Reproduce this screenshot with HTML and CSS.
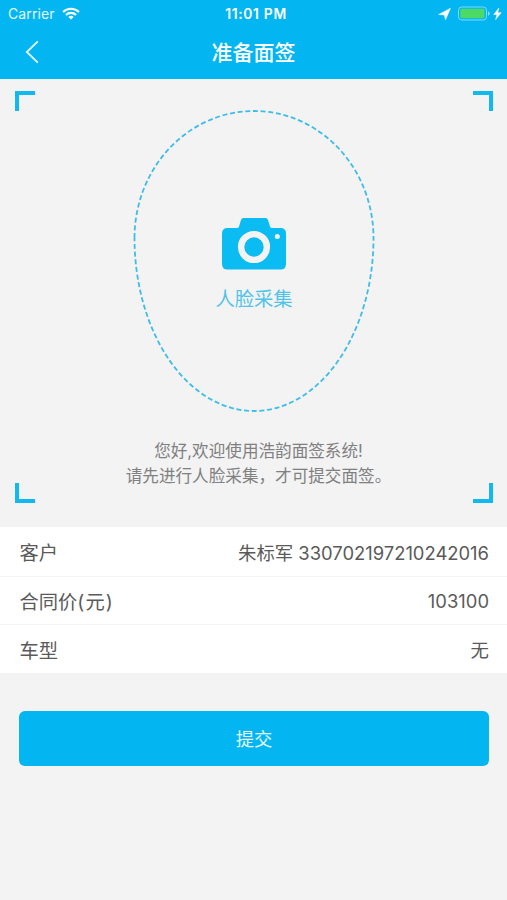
FILE: index.html
```html
<!DOCTYPE html>
<html lang="zh-CN">
<head>
<meta charset="utf-8">
<title>准备面签</title>
<link rel="stylesheet" href="styles.css">
</head>
<body>
<header class="header">
  <div class="status">
    <div class="status-left">
      <span class="carrier">Carrier</span>
      <svg class="wifi" width="18" height="13" viewBox="0 0 18 13" fill="none" stroke="#fff" stroke-width="2.2">
        <path d="M1.1 5A11.2 11.2 0 0 1 16.9 5"/>
        <path d="M4 8A7.1 7.1 0 0 1 14 8"/>
        <path d="M9 12.6L6.4 10A3.7 3.7 0 0 1 11.6 10Z" fill="#fff" stroke="none"/>
      </svg>
    </div>
    <span class="clock">11:01 PM</span>
    <div class="status-right">
      <svg width="67" height="16" viewBox="0 0 67 16">
        <path d="M13.5 2.2L8.5 13.8L7.3 9L1.7 8.5Z" fill="#fff" stroke="#fff" stroke-width=".5" stroke-linejoin="round"/>
        <rect x="21.5" y="1" width="28" height="13" rx="3.2" fill="none" stroke="#7fdaf8"/>
        <rect x="23.3" y="2.8" width="24.2" height="9.4" rx="1.4" fill="#4cd964"/>
        <path d="M51 5.2q1.8.3 1.8 2.3t-1.8 2.3z" fill="#7fdaf8"/>
        <path d="M61.8 2L56.7 8.6H60L58.6 13.6L64.2 6.7H60.8Z" fill="#fff" stroke="#fff" stroke-width=".5"/>
      </svg>
    </div>
  </div>
  <nav class="nav">
    <svg class="back" width="14" height="24" viewBox="0 0 14 24" fill="none" stroke="#e9faff" stroke-width="1.8"><path d="M12.8 1.3L1.8 12L12.8 22.7"/></svg>
    <h1>准备面签</h1>
  </nav>
</header>

<main>
  <section class="capture">
    <i class="corner top-left"></i>
    <i class="corner top-right"></i>
    <i class="corner bottom-left"></i>
    <i class="corner bottom-right"></i>
    <div class="face">
      <svg class="outline" width="242" height="302" viewBox="0 0 242 302" fill="none" stroke="#3dbde9" stroke-width="1.8" stroke-dasharray="5 2.7">
        <path d="M1.5 128A119.5 127 0 0 1 240.5 128A119.5 173 0 0 1 1.5 128Z"/>
      </svg>
      <svg class="camera" width="64" height="52" viewBox="0 0 64 52">
        <path fill="#0bbcf3" d="M5.5 10H15Q16.5 10 17 8.5L19 2Q19.6 0 21.5 0H43.5Q45.4 0 46 2L48 8.5Q48.5 10 50 10H58.5Q64 10 64 15.5V46Q64 51.5 58.5 51.5H5.5Q0 51.5 0 46V15.5Q0 10 5.5 10Z"/>
        <circle cx="32" cy="29" r="12.9" fill="none" stroke="#f3f3f3" stroke-width="6.4"/>
        <circle cx="55.3" cy="18.5" r="2.5" fill="#f3f3f3"/>
      </svg>
      <span class="face-label">人脸采集</span>
    </div>
    <p class="hint">您好,欢迎使用浩韵面签系统!<br>请先进行人脸采集，才可提交面签。</p>
  </section>

  <dl class="details">
    <div class="row"><dt>客户</dt><dd>朱标军 330702197210242016</dd></div>
    <div class="row"><dt>合同价<span class="unit">(元)</span></dt><dd>103100</dd></div>
    <div class="row"><dt>车型</dt><dd>无</dd></div>
  </dl>

  <button class="submit" type="button">提交</button>
</main>
</body>
</html>
```

FILE: styles.css
```css
* { box-sizing: border-box; }

body {
  margin: 0;
  min-height: 900px;
  background: #f3f3f3;
  color: #5a5a5a;
  font-family: Inter, "Noto Sans CJK SC", sans-serif;
}

.header {
  height: 79px;
  background: #03b6f1;
  color: #fff;
}

.status {
  display: grid;
  grid-template-columns: 1fr auto 1fr;
  align-items: center;
  height: 27px;
  padding: 0 3px 0 8px;
  font-size: 13px;
}

.status-left { display: flex; align-items: center; gap: 7px; }
.carrier { font-size: 14px; letter-spacing: 0.1px; color: #e3f8ff; }
.status-right { display: flex; justify-content: flex-end; }
.clock { font-size: 13.8px; font-weight: 600; letter-spacing: 0.7px; }

.nav {
  display: grid;
  grid-template-columns: 40px 1fr 40px;
  align-items: center;
  height: 50px;
}

.back { margin-left: 25px; }

h1 {
  margin: 2px 0 0;
  font-size: 21px;
  font-weight: 500;
  line-height: 30px;
  text-align: center;
}

.capture {
  position: relative;
  height: 448px;
  padding-top: 31px;
}

.corner {
  position: absolute;
  width: 20px;
  height: 20px;
  border: 0 solid #12b9ee;
}

.top-left { top: 12px; left: 15px; border-width: 4px 0 0 4px; }
.top-right { top: 12px; right: 14px; border-width: 4px 4px 0 0; }
.bottom-left { bottom: 24px; left: 15px; border-width: 0 0 4px 4px; }
.bottom-right { bottom: 24px; right: 14px; border-width: 0 4px 4px 0; }

.face {
  position: relative;
  display: flex;
  flex-direction: column;
  align-items: center;
  width: 242px;
  height: 302px;
  margin: 0 auto;
  padding-top: 108px;
}

.outline { position: absolute; inset: 0; }

.face-label {
  margin-top: 14px;
  padding-left: 1px;
  font-size: 19.3px;
  line-height: 30px;
  color: #4fc3ea;
}

.hint {
  margin: 27px 0 0;
  padding-left: 10px;
  font-size: 16.6px;
  line-height: 25px;
  text-align: center;
  color: #808080;
}

.details { margin: 0; background: #fff; }

.row {
  display: flex;
  justify-content: space-between;
  align-items: center;
  height: 48px;
  padding: 0 18px 0 19.5px;
  border-bottom: 1px solid #f3f3f3;
}

.row:first-child { height: 50px; }
.row:last-child { border-bottom: 0; }

dt { padding-top: 1px; font-size: 19.3px; }
.unit { letter-spacing: 1.1px; }
dd { margin: 0; font-size: 18.4px; }

.submit {
  display: block;
  width: 470px;
  height: 55px;
  margin: 38px 0 0 19px;
  padding: 0;
  border: 0;
  border-radius: 6px;
  background: #03b6f1;
  color: #e9faff;
  font: 18.3px/56px Inter, "Noto Sans CJK SC", sans-serif;
}
```
